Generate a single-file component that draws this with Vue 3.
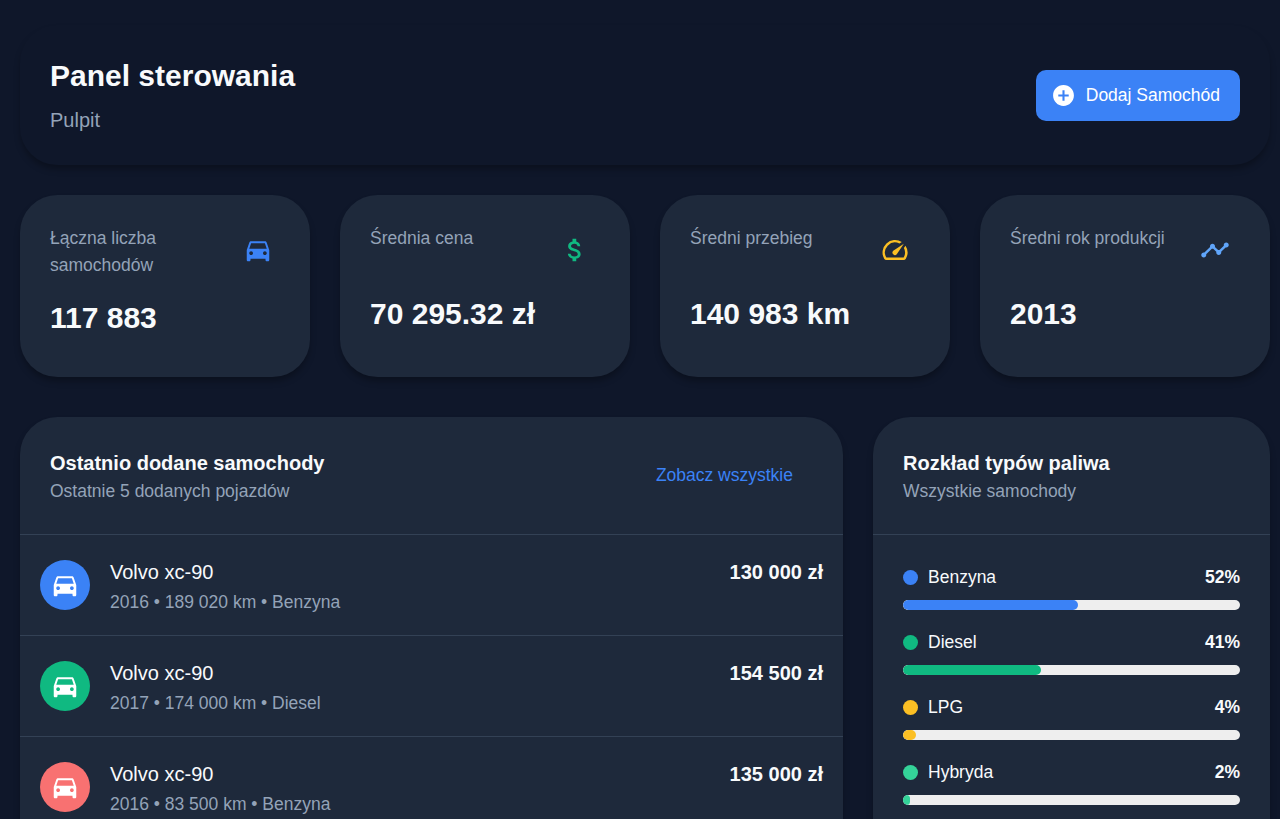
<script setup>
const car =
  'M18.92 6.01C18.72 5.42 18.16 5 17.5 5h-11c-.66 0-1.21.42-1.42 1.01L3 12v8c0 .55.45 1 1 1h1c.55 0 1-.45 1-1v-1h12v1c0 .55.45 1 1 1h1c.55 0 1-.45 1-1v-8l-2.08-5.99zM6.5 16c-.83 0-1.5-.67-1.5-1.5S5.67 13 6.5 13s1.5.67 1.5 1.5S7.33 16 6.5 16zm11 0c-.83 0-1.5-.67-1.5-1.5s.67-1.5 1.5-1.5 1.5.67 1.5 1.5-.67 1.5-1.5 1.5zM5 11l1.5-4.5h11L19 11H5z'
const dollar =
  'M11.8 10.9c-2.27-.59-3-1.2-3-2.15 0-1.09 1.01-1.85 2.7-1.85 1.78 0 2.44.85 2.5 2.1h2.21c-.07-1.72-1.12-3.3-3.21-3.81V3h-3v2.16c-1.94.42-3.5 1.68-3.5 3.61 0 2.31 1.91 3.46 4.7 4.13 2.5.6 3 1.48 3 2.41 0 .69-.49 1.79-2.7 1.79-2.06 0-2.87-.92-2.98-2.1h-2.2c.12 2.19 1.76 3.42 3.68 3.83V21h3v-2.15c1.95-.37 3.5-1.5 3.5-3.55 0-2.84-2.43-3.81-4.7-4.4z'
const speed =
  'M20.38 8.57l-1.23 1.85a8 8 0 0 1-.22 7.58H5.07A8 8 0 0 1 15.58 6.85l1.85-1.23A10 10 0 0 0 3.35 19a2 2 0 0 0 1.72 1h13.85a2 2 0 0 0 1.74-1 10 10 0 0 0-.27-10.44zm-9.79 6.84a2 2 0 0 0 2.83 0l5.66-8.49-8.49 5.66a2 2 0 0 0 0 2.83z'
const timeline =
  'M23 8c0 1.1-.9 2-2 2-.18 0-.35-.02-.51-.07l-3.56 3.55c.05.16.07.34.07.52 0 1.1-.9 2-2 2s-2-.9-2-2c0-.18.02-.36.07-.52l-2.55-2.55c-.16.05-.34.07-.52.07s-.36-.02-.52-.07l-4.55 4.56c.05.16.07.33.07.51 0 1.1-.9 2-2 2s-2-.9-2-2 .9-2 2-2c.18 0 .35.02.51.07l4.56-4.55C8.02 9.36 8 9.18 8 9c0-1.1.9-2 2-2s2 .9 2 2c0 .18-.02.36-.07.52l2.55 2.55c.16-.05.34-.07.52-.07s.36.02.52.07l3.55-3.56C19.02 8.35 19 8.18 19 8c0-1.1.9-2 2-2s2 .9 2 2z'
const addCircle =
  'M12 2C6.48 2 2 6.48 2 12s4.48 10 10 10 10-4.48 10-10S17.52 2 12 2zm5 11h-4v4h-2v-4H7v-2h4V7h2v4h4v2z'

const stats = [
  { label: 'Łączna liczba samochodów', value: '117 883', icon: car, tone: 'blue' },
  { label: 'Średnia cena', value: '70 295.32 zł', icon: dollar, tone: 'green' },
  { label: 'Średni przebieg', value: '140 983 km', icon: speed, tone: 'amber' },
  { label: 'Średni rok produkcji', value: '2013', icon: timeline, tone: 'sky' },
]

const cars = [
  { name: 'Volvo xc-90', meta: '2016 • 189 020 km • Benzyna', price: '130 000 zł', tone: 'blue' },
  { name: 'Volvo xc-90', meta: '2017 • 174 000 km • Diesel', price: '154 500 zł', tone: 'green' },
  { name: 'Volvo xc-90', meta: '2016 • 83 500 km • Benzyna', price: '135 000 zł', tone: 'red' },
]

const fuels = [
  { name: 'Benzyna', share: 52, tone: 'blue' },
  { name: 'Diesel', share: 41, tone: 'green' },
  { name: 'LPG', share: 4, tone: 'amber' },
  { name: 'Hybryda', share: 2, tone: 'mint' },
]
</script>

<template>
  <main class="page">
    <header class="hero">
      <div>
        <h1>Panel sterowania</h1>
        <p class="crumb">Pulpit</p>
      </div>
      <button class="add" type="button">
        <svg viewBox="0 0 24 24"><path :d="addCircle" /></svg>
        <span>Dodaj Samochód</span>
      </button>
    </header>

    <section class="stats">
      <article v-for="s in stats" :key="s.label" class="stat">
        <div class="stat-top">
          <span class="stat-label">{{ s.label }}</span>
          <span class="stat-icon" :class="s.tone">
            <svg viewBox="0 0 24 24"><path :d="s.icon" /></svg>
          </span>
        </div>
        <div class="stat-value">{{ s.value }}</div>
      </article>
    </section>

    <section class="panels">
      <article class="panel">
        <div class="panel-head">
          <div>
            <h2>Ostatnio dodane samochody</h2>
            <p>Ostatnie 5 dodanych pojazdów</p>
          </div>
          <a class="all">Zobacz wszystkie</a>
        </div>
        <div v-for="c in cars" :key="c.price" class="row">
          <span class="avatar" :class="c.tone">
            <svg viewBox="0 0 24 24"><path :d="car" /></svg>
          </span>
          <div class="info">
            <div class="name">{{ c.name }}</div>
            <div class="meta">{{ c.meta }}</div>
          </div>
          <div class="price">{{ c.price }}</div>
        </div>
      </article>

      <article class="panel">
        <div class="panel-head">
          <div>
            <h2>Rozkład typów paliwa</h2>
            <p>Wszystkie samochody</p>
          </div>
        </div>
        <div class="fuels">
          <div v-for="f in fuels" :key="f.name" class="fuel">
            <div class="fuel-top">
              <span class="dot" :class="f.tone"></span>
              <span class="fuel-name">{{ f.name }}</span>
              <span class="share">{{ f.share }}%</span>
            </div>
            <div class="track">
              <div class="fill" :class="f.tone" :style="{ width: f.share + '%' }"></div>
            </div>
          </div>
        </div>
      </article>
    </section>
  </main>
</template>

<style>
body {
  background: #0f172a;
  overflow: hidden;
}
</style>

<style scoped>
.page {
  box-sizing: border-box;
  height: 819px;
  overflow: hidden;
  padding: 25px 10px 0 20px;
  background: #0f172a;
  color: #f8fafc;
  font-family: "Liberation Sans", Arial, sans-serif;
  font-size: 17.5px;
}
h1, h2, p { margin: 0; }
svg { display: block; fill: currentColor; flex: none; }

.blue { --tone: #3b82f6; }
.green { --tone: #10b981; }
.amber { --tone: #fbbf24; }
.sky { --tone: #60a5fa; }
.red { --tone: #f87171; }
.mint { --tone: #34d399; }

.hero, .stat, .panel {
  border-radius: 37.5px;
  box-shadow: 0 5px 7.5px -1.25px rgba(0, 0, 0, 0.3);
}
.hero {
  box-sizing: border-box;
  height: 140px;
  padding: 0 30px;
  display: flex;
  align-items: center;
  justify-content: space-between;
}
h1 { font-size: 30px; line-height: 46px; }
.crumb { margin: 6px 0 2px; font-size: 20px; line-height: 31px; color: #94a3b8; }
.add {
  display: flex;
  align-items: center;
  gap: 10px;
  height: 51px;
  padding: 0 20px 0 15px;
  border: 0;
  border-radius: 10px;
  background: #3b82f6;
  color: #fff;
  font: inherit;
}
.add svg { width: 25px; height: 25px; }

.stats {
  display: grid;
  grid-template-columns: repeat(4, 1fr);
  gap: 30px;
  margin: 30px 0 40px;
}
.stat {
  box-sizing: border-box;
  height: 182px;
  padding: 30px;
  background: #1e293b;
}
.stat-top {
  display: flex;
  align-items: flex-start;
  justify-content: space-between;
}
.stat-label { line-height: 27px; color: #94a3b8; }
.stat-icon {
  display: flex;
  align-items: center;
  justify-content: center;
  width: 50px;
  height: 50px;
  color: var(--tone);
}
.stat-icon svg { width: 30px; height: 30px; }
.stat-value { margin-top: 16px; font-size: 30px; font-weight: 700; line-height: 46px; }

.panels {
  display: grid;
  grid-template-columns: 823px 1fr;
  gap: 30px;
}
.panel { height: 520px; overflow: hidden; background: #1e293b; }
.panel-head {
  box-sizing: border-box;
  height: 118px;
  padding: 31px 50px 31px 30px;
  display: flex;
  align-items: center;
  justify-content: space-between;
  border-bottom: 1px solid #334155;
}
h2 { font-size: 20px; line-height: 30px; }
.panel-head p { line-height: 26px; color: #94a3b8; }
.all { color: #3b82f6; }

.row {
  display: flex;
  gap: 20px;
  padding: 25px 20px;
  border-bottom: 1px solid #334155;
}
.avatar {
  display: flex;
  align-items: center;
  justify-content: center;
  width: 50px;
  height: 50px;
  border-radius: 50%;
  background: var(--tone);
  color: #fff;
}
.avatar svg { width: 30px; height: 30px; }
.info { flex: 1; height: 50px; }
.name { margin-top: -3px; font-size: 20px; line-height: 30px; }
.meta { line-height: 30px; color: #94a3b8; }
.price { margin-top: -3px; font-size: 20px; font-weight: 700; line-height: 30px; }

.fuels { padding: 29px 30px; }
.fuel { height: 65px; }
.fuel-top { display: flex; align-items: center; height: 27px; }
.dot { width: 15px; height: 15px; border-radius: 50%; background: var(--tone); }
.fuel-name { flex: 1; margin-left: 10px; }
.share { font-weight: 700; }
.track { margin-top: 9px; height: 10px; border-radius: 5px; overflow: hidden; background: #eee; }
.fill { height: 100%; border-radius: 5px; background: var(--tone); }
</style>
